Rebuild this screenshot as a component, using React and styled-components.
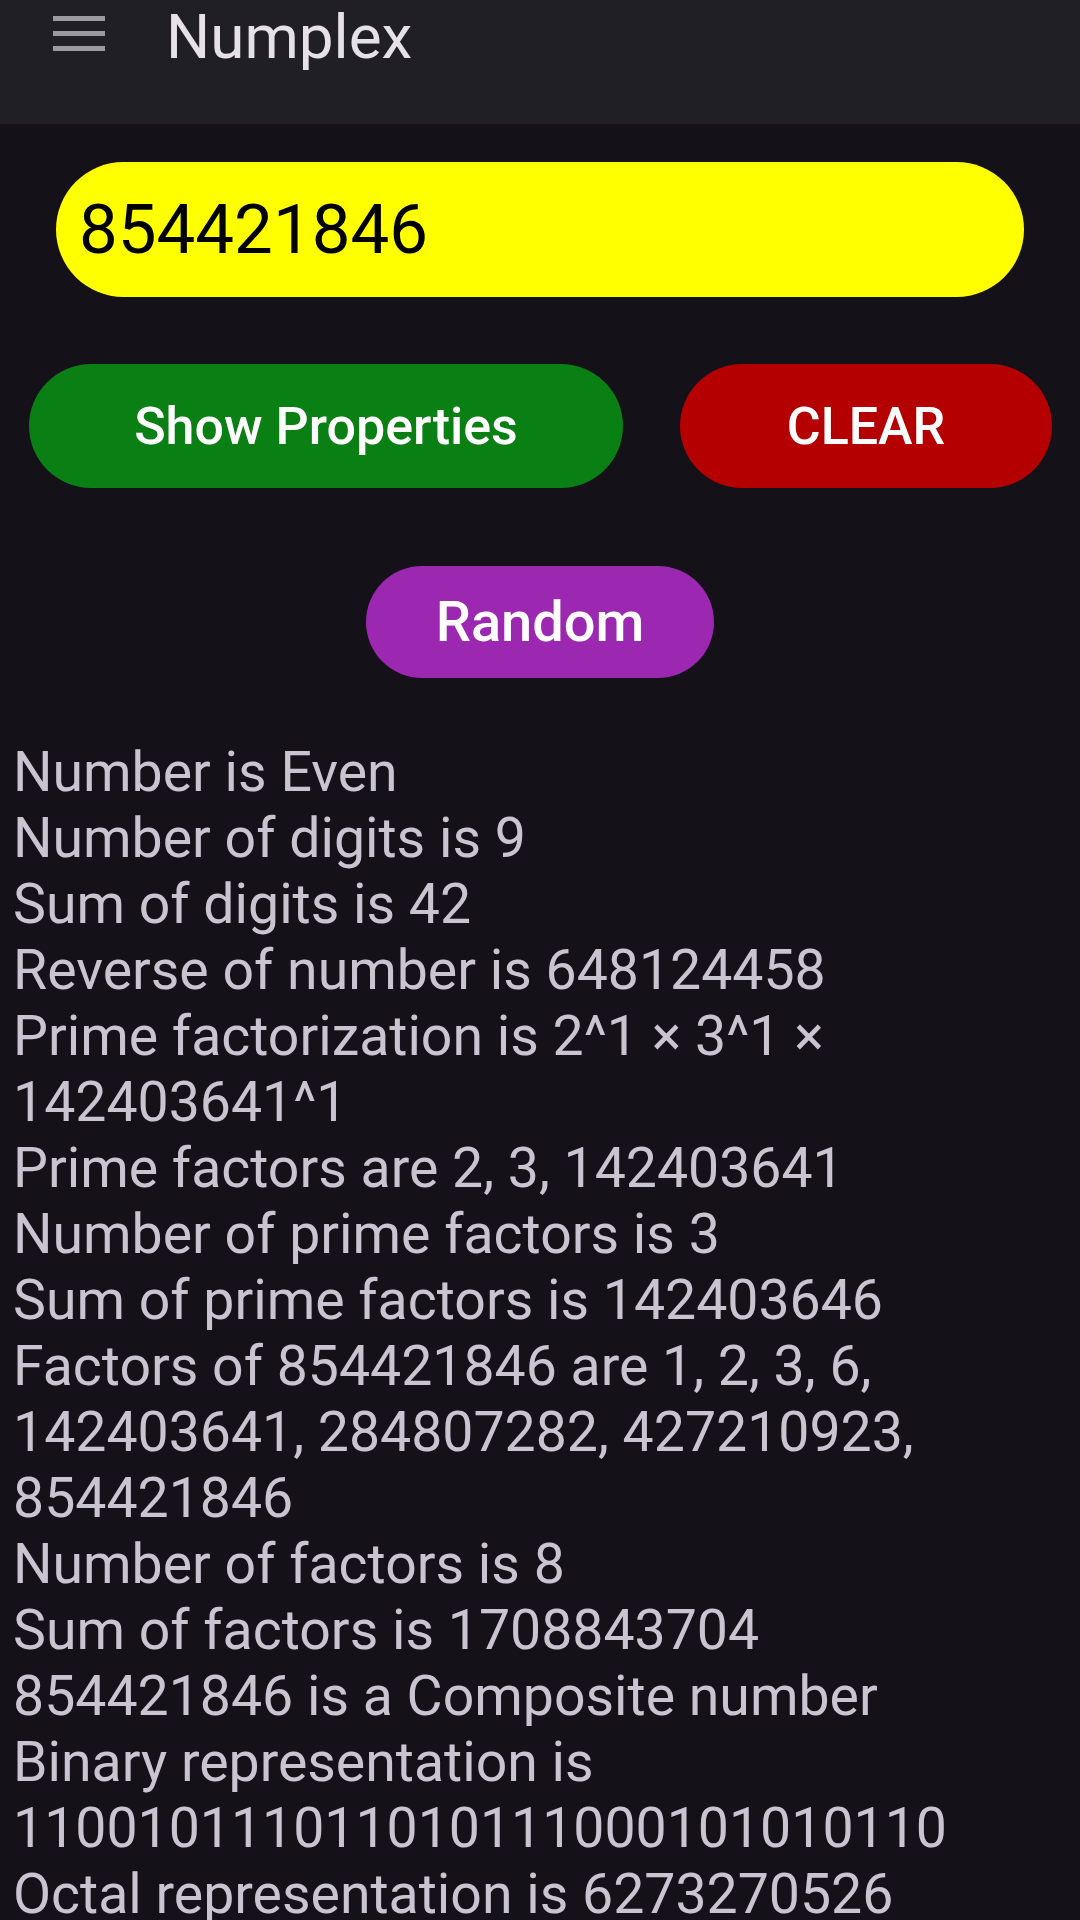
import styled, { createGlobalStyle } from 'styled-components';

const GlobalStyle = createGlobalStyle`
  html, body {
    margin: 0;
    padding: 0;
    background: #141218;
    font-family: Roboto, "Noto Sans", Arial, sans-serif;
  }
  * { box-sizing: border-box; }
`;

const Screen = styled.div`
  width: 1080px;
  height: 1920px;
  overflow: hidden;
  background: #141218;
`;

const TopBar = styled.header`
  height: 124px;
  background: #211f26;
  display: flex;
  align-items: flex-start;
  padding: 6px 0 0 53px;
`;

const MenuButton = styled.div`
  width: 52px;
  margin-top: 10px;
  display: flex;
  flex-direction: column;
  gap: 10px;
`;

const MenuLine = styled.span`
  display: block;
  height: 5px;
  background: #9b9aa0;
`;

const Title = styled.h1`
  margin: 0 0 0 61px;
  font-size: 62px;
  line-height: 62px;
  font-weight: 400;
  color: #e6e0e9;
`;

const Content = styled.main`
  display: flex;
  flex-direction: column;
`;

const NumberInput = styled.input`
  margin: 38px 56px 0;
  height: 135px;
  border: none;
  outline: none;
  border-radius: 68px;
  background: #ffff00;
  color: #000;
  padding: 0 23px;
  font-family: Roboto, sans-serif;
  font-size: 69px;
`;

const ButtonRow = styled.div`
  display: flex;
  justify-content: space-between;
  padding: 0 28px 0 29px;
  margin-top: 67px;
`;

const PillButton = styled.button`
  width: ${(p) => p.$width}px;
  height: ${(p) => p.$height}px;
  border: none;
  border-radius: ${(p) => p.$height / 2}px;
  background: ${(p) => p.$bg};
  color: #fff;
  font-family: Roboto, sans-serif;
  font-weight: 500;
  font-size: ${(p) => p.$size}px;
  display: flex;
  align-items: center;
  justify-content: center;
  padding: 0;
`;

const CenterRow = styled.div`
  display: flex;
  justify-content: center;
  margin-top: 78px;
`;

const Results = styled.div`
  margin-top: 62px;
  padding: 0 13px;
  color: #cac4d0;
  font-size: 55.4px;
  line-height: 66px;
`;

const ResultLine = styled.div``;

const results = [
  'Number is Even',
  'Number of digits is 9',
  'Sum of digits is 42',
  'Reverse of number is 648124458',
  'Prime factorization is 2^1 × 3^1 × 142403641^1',
  'Prime factors are 2, 3, 142403641',
  'Number of prime factors is 3',
  'Sum of prime factors is 142403646',
  'Factors of 854421846 are 1, 2, 3, 6, 142403641, 284807282, 427210923, 854421846',
  'Number of factors is 8',
  'Sum of factors is 1708843704',
  '854421846 is a Composite number',
  'Binary representation is 110010111011010111000101010110',
  'Octal representation is 6273270526',
];

export default function App() {
  return (
    <Screen>
      <GlobalStyle />
      <TopBar>
        <MenuButton>
          <MenuLine />
          <MenuLine />
          <MenuLine />
        </MenuButton>
        <Title>Numplex</Title>
      </TopBar>
      <Content>
        <NumberInput defaultValue="854421846" />
        <ButtonRow>
          <PillButton $width={594} $height={124} $bg="#0a7f13" $size={52}>
            Show Properties
          </PillButton>
          <PillButton $width={372} $height={124} $bg="#b40000" $size={52}>
            CLEAR
          </PillButton>
        </ButtonRow>
        <CenterRow>
          <PillButton $width={348} $height={112} $bg="#9c27b0" $size={56}>
            Random
          </PillButton>
        </CenterRow>
        <Results>
          {results.map((r) => (
            <ResultLine key={r}>{r}</ResultLine>
          ))}
        </Results>
      </Content>
    </Screen>
  );
}
